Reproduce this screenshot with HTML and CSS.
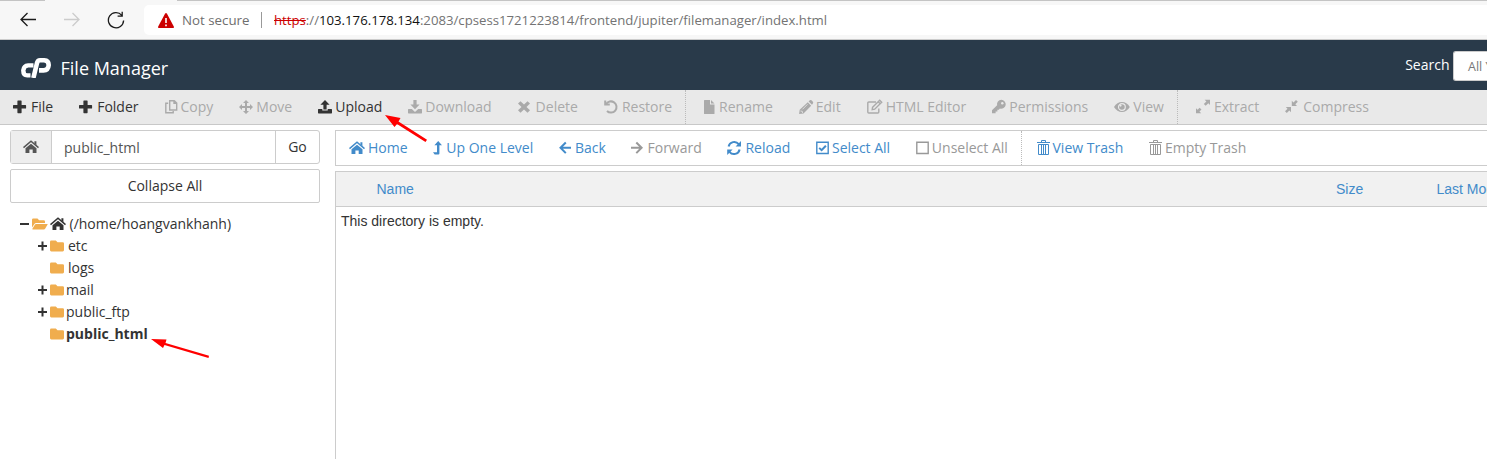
FILE: index.html
```html
<!DOCTYPE html>
<html lang="en">
<head>
<meta charset="utf-8">
<title>File Manager</title>
<link rel="stylesheet" href="styles.css">
</head>
<body>
<svg class="defs" width="0" height="0">
  <symbol id="plus" viewBox="0 0 16 16"><path d="M5 1.500h3q.6 0 .6.6v4h3.900q.6 0 .6.6v2.300q0 .6-.6.6H8.600v4q0 .6-.6.6H5q-.6 0-.6-.6v-4H.6Q0 9.600 0 9V6.700q0-.6.6-.6h3.800v-4q0-.6.6-.6z"/></symbol>
  <symbol id="copy" viewBox="0 0 16 16"><path class="line" d="M4.700 1.700h4.600L11.700 4v7H4.700zM9 1.700v2.600h2.700M3.200 4.200H.8v9.500h7.400v-1.600"/></symbol>
  <symbol id="move" viewBox="0 0 16 16"><path d="M7 1l3 3H8v3h3V5l3 3-3 3V9H8v3h2l-3 3-3-3h2V9H3v2L0 8l3-3v2h3V4H4z"/></symbol>
  <symbol id="upload" viewBox="0 0 16 16"><path d="M7 1l4.600 4.700H8.600v4.800H5.400V5.700H2.400zM.6 10H4.300v1.600h5.400V10h3.700q.6 0 .6.6v3.200q0 .6-.6.6H.6q-.6 0-.6-.6v-3.200Q0 10 .6 10z"/></symbol>
  <symbol id="download" viewBox="0 0 16 16"><path d="M5.400 1h3.200v4.600h3L7 10.300 2.400 5.600h3zM.6 10h3.200L7 13l3.200-3h3.200q.6 0 .6.6v3.200q0 .6-.6.6H.6q-.6 0-.6-.6v-3.200Q0 10 .6 10z"/></symbol>
  <symbol id="delete" viewBox="0 0 16 16"><path d="M2.500 2.200L6 5.500l3.500-3.300L12 4.600 8.500 8l3.500 3.300-2.500 2.500L6 10.400l-3.500 3.400L0 11.300 3.500 8 0 4.600z"/></symbol>
  <symbol id="restore" viewBox="0 0 16 16"><path class="bold" d="M2 5.300A5.600 5.600 0 1 1 3 12"/><path d="M.2 1.400h2v3.200h3.600v2H.2z"/></symbol>
  <symbol id="file" viewBox="0 0 16 16"><path d="M.6 1H6v4.500h4.500v9q0 .5-.6.500H.6q-.6 0-.6-.5v-13Q0 1 .6 1zM7 1l3.500 3.500H7z"/></symbol>
  <symbol id="pencil" viewBox="0 0 16 16"><path d="M8.800 3.300l3.400 3.400-7.700 7.700L.1 15l.6-4.200zM9.600 2.400L10.800 1.300q.9-.7 1.700 0l1.400 1.500q.7.8 0 1.600L13 5.800z"/><path class="cut" d="M3.500 10.300l5-5M1.500 12l1.800.3.300 1.700"/></symbol>
  <symbol id="editor" viewBox="0 0 16 16"><path class="line" d="M9 3H1.800Q.8 3 .8 4v9q0 1 1 1h9q1 0 1-1V9.500M5.600 8.200L12.700 1.200l2 2-7 7-2.500.4zM11.200 2.700l2 2"/></symbol>
  <symbol id="key" viewBox="0 0 16 16"><path d="M9.300.8A4.500 4.500 0 1 1 7.900 9.600L6.800 10.700H5.400v1.700H3.600v1.800H0v-2.900l5.100-5A4.500 4.500 0 0 1 9.300.8z"/><circle class="hole" cx="10.300" cy="4.200" r="1.200"/></symbol>
  <symbol id="eye" viewBox="0 0 16 16"><path d="M0 8Q3 3 7.900 3T15.800 8Q12.700 13 7.900 13T0 8z"/><circle class="holeline" cx="7.900" cy="8" r="3.400"/><circle class="hole" cx="6.500" cy="6.600" r="1.100"/></symbol>
  <symbol id="extract" viewBox="0 0 16 16"><path d="M8.700.7H14v5.200l-1.700-1.700-2.600 2.500-1.900-1.800 2.600-2.500zM0 9.200l1.600 1.600 2-2 1.900 1.800-2 2 1.700 1.700H0z"/></symbol>
  <symbol id="compress" viewBox="0 0 16 16"><path d="M11 1l1.800 1.800-2.500 2.400 1.700 1.700H6.800V1.700l1.700 1.700zM.8 8.100H6v5.200l-1.700-1.700-2.500 2.300L0 12.200l2.500-2.400z"/></symbol>
  <symbol id="home" viewBox="0 0 16 16"><path class="roof" d="M.5 8.600L8 2.300l7.500 6.300"/><path d="M8 4.700l5.500 4.600v4.800H9.700v-3.700H6.400v3.700H2.500V9.300zM11.400 2.200h2v4l-2-1.700z"/></symbol>
  <symbol id="levelup" viewBox="0 0 16 16"><path d="M5.200 1L9 5.300H6.400v8.200q0 1-1 1H1.700L0 12.200h4V5.300H1.400z"/></symbol>
  <symbol id="back" viewBox="0 0 16 16"><path class="bold" d="M6.800 2.500L1.500 7.800l5.300 5.300M1.700 7.800H12"/></symbol>
  <symbol id="forward" viewBox="0 0 16 16"><path class="bold" d="M5.300 2.500l5.300 5.300-5.300 5.300M10.400 7.800H0"/></symbol>
  <symbol id="reload" viewBox="0 0 16 16"><path class="bold" d="M1.600 6.500A5.700 5.700 0 0 1 11.700 4.200M12.600 9.500A5.700 5.700 0 0 1 2.500 11.800"/><path d="M14 1v5.500H8.600zM.2 15V9.500h5.400z"/></symbol>
  <symbol id="checked" viewBox="0 0 16 16"><path class="line" d="M.8 2.200h11.400v11.300H.8z"/><path class="bold" d="M3.200 7.900L5.600 10.200 9.900 5.700"/></symbol>
  <symbol id="unchecked" viewBox="0 0 16 16"><path class="line" d="M.8 2.200h11.400v11.300H.8z"/></symbol>
  <symbol id="trash" viewBox="0 0 16 16"><path class="thin" d="M0 2.500h13M4.500 2.500v-2h4v2M1.500 4.500v10h10v-10zM4.500 5v9M6.500 5v9M8.500 5v9"/></symbol>
  <symbol id="folder" viewBox="0 0 16 16"><path d="M1.300 2.600h4.500L7.500 4.300h5.200q1.300 0 1.300 1.300v6.500q0 1.300-1.300 1.300H1.300Q0 13.400 0 12.100V3.900Q0 2.600 1.300 2.600z"/></symbol>
  <symbol id="folderopen" viewBox="0 0 16 16"><path d="M0 11.600V3.800q0-1.200 1.200-1.200h4.300l1.600 1.700h4.700q1.200 0 1.200 1.200V7H4.200Q3 7 2.400 8zM4 7.900h11.300q.7 0 .3.600l-2.500 4.200q-.4.700-1.200.7H.8q-.7 0-.4-.6L3 8.500q.3-.6 1-.6z"/></symbol>
  <symbol id="expand" viewBox="0 0 10 10"><path class="sign" d="M0 5h9M4.500.5v9"/></symbol>
  <symbol id="collapse" viewBox="0 0 10 10"><path class="sign" d="M0 5h9"/></symbol>
</svg>

<header class="browser">
  <div class="tabs"><i class="tab-left"></i><i class="tab-right"></i></div>
  <div class="nav">
    <svg class="nav-icon" viewBox="0 0 18 18"><path d="M17 8.500H2M8.500 2L2 8.500 8.500 15"/></svg>
    <svg class="nav-icon off" viewBox="0 0 18 18"><path d="M1 8.500h15M9.500 2L16 8.500 9.500 15"/></svg>
    <svg class="nav-icon" viewBox="0 0 18 18"><path d="M14.800 4.300A7.600 7.600 0 1 0 16.600 9.500M15.200.8v4.400h-4.600"/></svg>
    <div class="address">
      <svg class="warning" viewBox="0 0 16 15"><path d="M7 .8q1-1.500 2 0l6.800 12.700Q16.200 15 15 15H1q-1.200 0-.8-1.500z"/><path class="mark" d="M8 5v5M8 11.500v1.700"/></svg>
      <span class="insecure">Not secure</span>
      <i class="bar"></i>
      <span class="url"><s>https</s>://<b>103.176.178.134</b>:2083/cpsess1721223814/frontend/jupiter/filemanager/index.html</span>
    </div>
  </div>
</header>

<div class="titlebar">
  <svg class="logo" viewBox="0 0 30 20"><path class="c" d="M12.500 7.400H7.200Q2.800 7.700 2.300 12.300 2.200 17.300 6.300 17.400H9.500"/><path class="p" d="M12.400 20L16 5Q16.800 2.300 19 2.300H23.200Q27.700 2.600 27.700 7 27.300 12.300 22.500 12.400H18"/></svg>
  <h1>File Manager</h1>
  <span class="search">Search</span>
  <div class="scope">All Your Files</div>
</div>

<nav class="toolbar">
  <a class="on"><svg class="w18"><use href="#plus"/></svg>File</a>
  <a class="on"><svg class="w18"><use href="#plus"/></svg>Folder</a>
  <a><svg class="w16"><use href="#copy"/></svg>Copy</a>
  <a><svg class="w17"><use href="#move"/></svg>Move</a>
  <a class="on"><svg class="w17"><use href="#upload"/></svg>Upload</a>
  <a><svg class="w17"><use href="#download"/></svg>Download</a>
  <a><svg class="w18"><use href="#delete"/></svg>Delete</a>
  <a><svg class="w18"><use href="#restore"/></svg>Restore</a>
  <i class="divider"></i>
  <a><svg class="w15"><use href="#file"/></svg>Rename</a>
  <a><svg class="w17"><use href="#pencil"/></svg>Edit</a>
  <a><svg class="w19"><use href="#editor"/></svg>HTML Editor</a>
  <a><svg class="w17"><use href="#key"/></svg>Permissions</a>
  <a><svg class="w19"><use href="#eye"/></svg>View</a>
  <i class="divider"></i>
  <a><svg class="w18"><use href="#extract"/></svg>Extract</a>
  <a><svg class="w18"><use href="#compress"/></svg>Compress</a>
</nav>

<main class="content">
  <aside class="sidebar">
    <div class="path">
      <span class="path-home"><svg><use href="#home"/></svg></span>
      <span class="path-input">public_html</span>
      <span class="path-go">Go</span>
    </div>
    <div class="collapse-all">Collapse All</div>
    <ul class="tree">
      <li class="root"><svg class="toggle"><use href="#collapse"/></svg><svg class="folder open"><use href="#folderopen"/></svg><svg class="house"><use href="#home"/></svg>(/home/hoangvankhanh)</li>
      <li><svg class="toggle"><use href="#expand"/></svg><svg class="folder wide"><use href="#folder"/></svg>etc</li>
      <li><i class="toggle"></i><svg class="folder wide"><use href="#folder"/></svg>logs</li>
      <li><svg class="toggle"><use href="#expand"/></svg><svg class="folder"><use href="#folder"/></svg>mail</li>
      <li><svg class="toggle"><use href="#expand"/></svg><svg class="folder"><use href="#folder"/></svg>public_ftp</li>
      <li class="current"><i class="toggle"></i><svg class="folder"><use href="#folder"/></svg>public_html</li>
    </ul>
  </aside>
  <section class="files">
    <nav class="actions">
      <a><svg class="w19"><use href="#home"/></svg>Home</a>
      <a><svg class="w13"><use href="#levelup"/></svg>Up One Level</a>
      <a><svg class="w16"><use href="#back"/></svg>Back</a>
      <a class="off"><svg class="w16"><use href="#forward"/></svg>Forward</a>
      <a><svg class="w18"><use href="#reload"/></svg>Reload</a>
      <a><svg class="w16"><use href="#checked"/></svg>Select All</a>
      <a class="off"><svg class="w16"><use href="#unchecked"/></svg>Unselect All</a>
      <i class="divider"></i>
      <a><svg class="w16"><use href="#trash"/></svg>View Trash</a>
      <a class="off"><svg class="w16"><use href="#trash"/></svg>Empty Trash</a>
    </nav>
    <div class="table">
      <div class="thead"><span class="name">Name</span><span class="size">Size</span><span class="modified">Last Modified</span></div>
      <div class="empty">This directory is empty.</div>
    </div>
  </section>
</main>
<svg class="arrows" viewBox="0 0 1487 459"><path d="M385 115L400.500 118 398.500 121.500 427 139.800 425.500 142 397 124 394.500 127z"/><path d="M151 339L166.500 339.500 165.500 343 209 355.700 208.500 358 164.500 345 163 348z"/></svg>
</body>
</html>
```

FILE: styles.css
```css
* { box-sizing: border-box; }
body {
  position: relative;
  display: flex;
  flex-direction: column;
  width: 1487px;
  height: 459px;
  margin: 0;
  overflow: hidden;
  background: #fff;
  color: #333;
  font: 14px/20px "Open Sans", sans-serif;
}
.defs { position: absolute; }
svg { flex: none; fill: currentColor; }
.line, .bold, .thin, .roof, .sign { fill: none; stroke: currentColor; }
.line { stroke-width: 1.4; }
.bold { stroke-width: 2; }
.thin { stroke-width: 1; }
.roof { stroke-width: 1.5; }
.sign { stroke-width: 2; }
.cut { fill: none; stroke: #e9e9e9; stroke-width: .8; }
.hole { fill: #e9e9e9; }
.holeline { fill: none; stroke: #e9e9e9; stroke-width: 1.2; }

.browser { height: 40px; background: #f7f7f7; border-bottom: 1px solid #ccc; }
.tabs { display: flex; justify-content: space-between; height: 5px; }
.tabs i { height: 1px; background: #c4c4c4; }
.tab-left { width: 45px; }
.tab-right { width: 1310px; }
.nav { display: flex; height: 30px; padding-left: 19px; }
.nav-icon { width: 18px; height: 18px; margin: 6px 26px 0 0; fill: none; stroke: #1b1b1b; stroke-width: 1.3; }
.nav-icon.off { stroke: #ccc; }
.nav-icon:nth-child(3) { margin-right: 19px; }
.address { display: flex; align-items: center; flex: 1; padding-left: 14px; background: #fff; border-radius: 5px 0 0 5px; }
.warning { width: 16px; height: 15px; fill: #c00; }
.mark { stroke: #fff; stroke-width: 1.6; }
.insecure { width: 79px; margin-left: 8px; color: #6e6e6e; white-space: nowrap; font-size: 13.3px; }
.bar { width: 1px; height: 16px; margin-right: 12px; background: #999; }
.url { color: #737373; font-size: 13.2px; white-space: nowrap; }
.url s { color: #c00; }
.url b { color: #111; font-weight: 400; }

.titlebar { display: flex; height: 50px; padding-left: 21px; background: #293a4a; color: #fff; }
.logo { width: 30px; height: 20px; margin-top: 18px; fill: none; stroke: #fff; }
.c { stroke-width: 4.4; }
.p { stroke-width: 4.6; }
h1 { margin: 16px 0 0 9.5px; font: 18px/25px "Open Sans", sans-serif; white-space: nowrap; }
.search { margin: 15px 3.5px 0 auto; }
.scope { width: 34px; height: 30px; margin-top: 11px; padding: 5px 0 0 14px; overflow: hidden; background: #fff; border: 1px solid #ccc; border-right: 0; border-radius: 3px 0 0 3px; color: #777; font-size: 12.5px; white-space: nowrap; }

.toolbar { display: flex; height: 35px; padding-left: 13px; background: #e9e9e9; border-bottom: 1px solid #c8c8c8; color: #aaa; }
.toolbar a, .actions a { display: flex; align-items: center; margin-right: 26px; white-space: nowrap; }
.toolbar .on { color: #333; }
.toolbar a svg, .actions a svg { width: 16px; height: 16px; overflow: visible; }
.w13 { margin-right: -3px; }
.w15 { margin-right: -1px; }
.w17 { margin-right: 1px; }
.w18 { margin-right: 2px; }
.w19 { margin-right: 3px; }
.divider { margin: 0 18px 0 -13px; border-left: 1px dotted #bbb; }

.content { display: flex; flex: 1; padding: 5px 0 0 10px; }
.sidebar { width: 310px; margin-right: 15px; }
.path { display: flex; height: 34px; border: 1px solid #ccc; border-radius: 3px; }
.path-home { display: flex; align-items: center; justify-content: center; width: 41px; background: #eee; border-right: 1px solid #ccc; color: #555; }
.path-home svg { width: 16px; height: 16px; }
.path-input { width: 224px; padding: 7px 12px; border-right: 1px solid #ccc; color: #555; }
.path-go { flex: 1; padding-top: 6px; text-align: center; }
.collapse-all { height: 34px; margin-top: 5px; padding-top: 6px; border: 1px solid #ccc; border-radius: 2px; text-align: center; }
.tree { margin: 10px 0 0; padding: 0; list-style: none; }
.tree li { display: flex; align-items: center; height: 22px; padding-left: 28px; white-space: nowrap; }
.tree .root { padding-left: 10px; }
.toggle { width: 10px; height: 10px; margin-right: 2px; }
.folder { width: 16px; height: 16px; color: #f0ad4e; }
.folder.wide, .folder.open { margin-right: 2px; }
.house { width: 16px; height: 16px; margin-right: 3.5px; }
.current { font-weight: 700; }

.files { display: flex; flex-direction: column; flex: 1; min-width: 0; }
.actions { display: flex; height: 36px; padding-left: 13px; border: 1px solid #ccc; border-right: 0; color: #428bca; }
.actions a { margin-right: 25.7px; }
.actions .off { color: #999; }
.actions .divider { margin-right: 15px; }
.table { flex: 1; margin-top: 5px; border: solid #ccc; border-width: 1px 0 0 1px; font-family: "Liberation Sans", sans-serif; }
.thead { display: flex; height: 35px; padding: 7px 0 0 40.5px; background: #f1f1f1; border-bottom: 1px solid #ccc; color: #428bca; white-space: nowrap; }
.name { flex: none; width: 959.5px; }
.size { flex: none; width: 100.5px; }
.modified { width: 50px; }
.empty { padding: 4px 5px; }
.arrows { position: absolute; inset: 0; width: 1487px; height: 459px; fill: #f00; }
```
